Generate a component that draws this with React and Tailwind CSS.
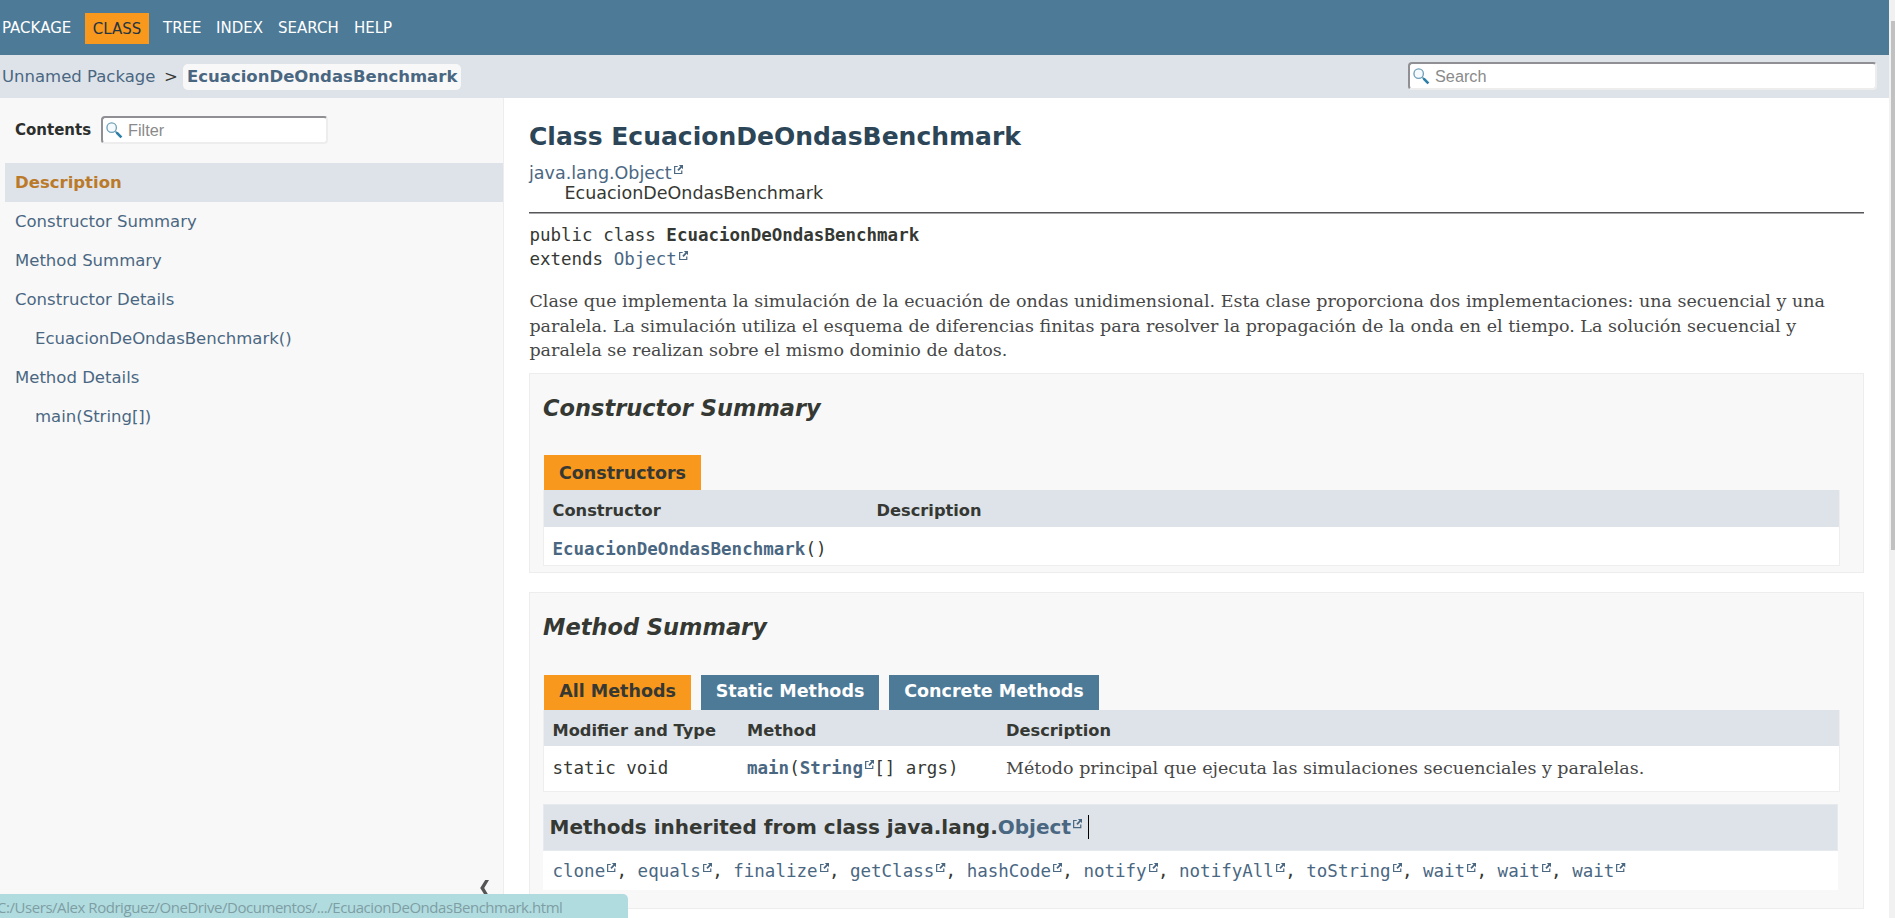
import React from "react";

const SANS = "font-['DejaVu_Sans',sans-serif]";
const MONO = "font-['DejaVu_Sans_Mono',monospace]";

function Ext({ className = "" }) {
  return (
    <svg viewBox="0 0 10 10" className={"inline-block size-[9.25px] ml-[2px] align-baseline relative -top-[5px] " + className}>
      <path d="M4 1.6H0.7V9.3H8.4V6" fill="none" stroke="#4A6782" strokeWidth="1.3" />
      <path d="M5.2 0H10V4.8L8.3 3.1L5 6.4L3.6 5L6.9 1.7Z" fill="#4A6782" />
    </svg>
  );
}

function SearchBox({ label, className }) {
  return (
    <div className={"flex items-center bg-white rounded-[4px] border-2 border-t-[#8f8f94] border-l-[#8f8f94] border-r-[#ededed] border-b-[#ededed] " + className}>
      <svg viewBox="0 0 18 18" className="size-[17px] ml-[3px] shrink-0">
        <circle cx="6" cy="6" r="5" fill="#f4fafd" stroke="#6f9fb8" strokeWidth="1.4" />
        <path d="M10 10L12 12" stroke="#4a86a5" strokeWidth="1.6" />
        <path d="M11.3 11.3L16.3 16.3" stroke="#2d7ea6" strokeWidth="2.8" />
      </svg>
      <span className="ml-[5px] text-[16.25px] leading-[20px] text-[#8a8a8a] font-['Liberation_Sans',sans-serif]">{label}</span>
    </div>
  );
}

const toc = [
  ["Constructor Summary", "pl-[15px]"],
  ["Method Summary", "pl-[15px]"],
  ["Constructor Details", "pl-[15px]"],
  ["EcuacionDeOndasBenchmark()", "pl-[35px]"],
  ["Method Details", "pl-[15px]"],
  ["main(String[])", "pl-[35px]"],
];

const inherited = ["clone", "equals", "finalize", "getClass", "hashCode", "notify", "notifyAll", "toString", "wait", "wait", "wait"];

export default function App() {
  return (
    <div className={"flex h-[918px] w-[1895px] overflow-hidden bg-white text-[#353833] relative " + SANS}>
      <div className="flex flex-col w-[1889px] h-full">
        <nav className="flex items-center h-[55px] shrink-0 bg-[#4D7A97] text-white text-[15px] leading-[32px] pl-[2px] pt-px">
          <span className="w-[83px]">PACKAGE</span>
          <span className="w-[64px] h-[31px] bg-[#F8981D] text-[#253441] text-center mr-[14px]">CLASS</span>
          <span className="w-[53px]">TREE</span>
          <span className="w-[62px]">INDEX</span>
          <span className="w-[76px]">SEARCH</span>
          <span>HELP</span>
        </nav>
        <div className="flex items-center h-[43px] shrink-0 bg-[#dee3e9] pl-[2px] pr-[12px] text-[16.5px]">
          <span className="w-[162px] pt-px text-[#4A6782]">Unnamed Package</span>
          <span className="w-[19px] pt-px">&gt;</span>
          <span className="flex items-center w-[278px] h-[26px] rounded-[5px] bg-[#f8f8f8] pl-[4px] pt-px font-bold text-[#4A6782]">EcuacionDeOndasBenchmark</span>
          <SearchBox label="Search" className="ml-auto mb-px w-[469px] h-[28px]" />
        </div>
        <div className="flex flex-1 min-h-0">
          <aside className="flex flex-col w-[504px] shrink-0 bg-[#f8f8f8] border-r border-[#ededed] text-[#4A6782] text-[16.5px]">
            <div className="flex items-center h-[65px] pl-[15px] pb-px">
              <span className="text-[15px] font-bold text-[#2c2f2c] w-[86px]">Contents</span>
              <SearchBox label="Filter" className="w-[227px] h-[28px]" />
            </div>
            <div className="ml-[5px] h-[39px] pl-[10px] pt-[2px] flex items-center bg-[#dee3e9] font-bold text-[#bb7a2a]">Description</div>
            {toc.map(([t, c]) => (
              <div key={t} className={"h-[39px] pt-[2px] flex items-center " + c}>{t}</div>
            ))}
            <svg viewBox="0 0 9 16" className="w-[9px] h-[16px] mt-auto mb-[22px] ml-[480px]">
              <path d="M5.2 0H9L4.2 8L9 16H5.2L0.2 8Z" fill="#555" />
            </svg>
          </aside>
          <main className="flex flex-col ml-[25px] w-[1335px] text-[17.5px]">
            <h1 className="mt-[22px] h-[34px] leading-[34px] text-[25px] font-bold text-[#2c4557]">Class EcuacionDeOndasBenchmark</h1>
            <div className="mt-[9px] h-[20px] leading-[20px] text-[#4A6782]">java.lang.Object<Ext /></div>
            <div className="h-[20px] leading-[20px] pl-[35.5px]">EcuacionDeOndasBenchmark</div>
            <div className="mt-[9px] h-[2px] border-t border-[#55565a] bg-[#a8a8aa]" />
            <div className={"mt-[9px] leading-[24px] h-[49px] pl-[0.4px] " + MONO}>
              <div>public class <b>EcuacionDeOndasBenchmark</b></div>
              <div>extends <span className="text-[#4A6782]">Object<Ext /></span></div>
            </div>
            <p className="mt-[17px] h-[84px] pl-[0.4px] leading-[24.5px] text-[#474747] font-['DejaVu_Serif',serif]">
              Clase que implementa la simulación de la ecuación de ondas unidimensional. Esta clase proporciona dos implementaciones: una secuencial y una<br />
              paralela. La simulación utiliza el esquema de diferencias finitas para resolver la propagación de la onda en el tiempo. La solución secuencial y<br />
              paralela se realizan sobre el mismo dominio de datos.
            </p>

            <section className="h-[200px] shrink-0 bg-[#f8f8f8] border border-[#ededed] pl-[13px]">
              <h2 className="mt-[19px] h-[30px] leading-[30px] text-[22.5px] font-bold italic">Constructor Summary</h2>
              <div className="mt-[32px] ml-px flex">
                <div className="h-[35px] w-[157px] bg-[#F8981D] text-center leading-[36px] font-bold text-[#353833]">Constructors</div>
              </div>
              <div className="w-[1297px] border border-t-0 border-[#eeeeee] bg-white">
                <div className="flex h-[37px] items-center bg-[#dee3e9] pl-[8.5px] pt-[5px] text-[16.25px] font-bold">
                  <span className="w-[324px]">Constructor</span><span>Description</span>
                </div>
                <div className={"h-[38px] pl-[8.5px] leading-[44px] " + MONO}>
                  <b className="text-[#4A6782]">EcuacionDeOndasBenchmark</b>()
                </div>
              </div>
            </section>

            <section className="mt-[19px] h-[317px] shrink-0 bg-[#f8f8f8] border border-[#ededed] pl-[13px]">
              <h2 className="mt-[19px] h-[30px] leading-[30px] text-[22.5px] font-bold italic">Method Summary</h2>
              <div className="mt-[33px] ml-px flex gap-[10px] h-[35px] font-bold leading-[33px] text-center">
                <div className="w-[147px] bg-[#F8981D]">All Methods</div>
                <div className="w-[178px] bg-[#4D7A97] text-white">Static Methods</div>
                <div className="w-[210px] bg-[#4D7A97] text-white">Concrete Methods</div>
              </div>
              <div className="w-[1297px] border border-t-0 border-[#eeeeee] bg-white">
                <div className="flex h-[36px] items-center bg-[#dee3e9] pl-[8.5px] text-[16.25px] font-bold pt-[6px]">
                  <span className="w-[194.5px]">Modifier and Type</span><span className="w-[259px]">Method</span><span>Description</span>
                </div>
                <div className={"h-[45px] flex pl-[8.5px] leading-[44px] " + MONO}>
                  <span className="w-[194.5px]">static void</span>
                  <span className="w-[259px] whitespace-pre"><b className="text-[#4A6782]">main</b>(<b className="text-[#4A6782]">String<Ext /></b>[] args)</span>
                  <span className="text-[#474747] font-['DejaVu_Serif',serif]">Método principal que ejecuta las simulaciones secuenciales y paralelas.</span>
                </div>
              </div>
              <div className="mt-[12px] w-[1295px] bg-white">
                <h3 className="h-[47px] flex items-center bg-[#dee3e9] border border-[#e6e9ee] pl-[5.5px] pb-[2px] text-[20px] font-bold">
                  <span>Methods inherited from class java.lang.<span className="text-[#4A6782]">Object<Ext /></span></span>
                  <span className="ml-[6px] h-[24px] w-px bg-black" />
                </h3>
                <div className={"h-[39px] pl-[9.5px] leading-[40px] whitespace-nowrap " + MONO}>
                  {inherited.map((m, i) => (
                    <React.Fragment key={i}>
                      <span className="text-[#4A6782]">{m}<Ext className="mr-[0.1px]" /></span>{i < 10 ? ", " : ""}
                    </React.Fragment>
                  ))}
                </div>
              </div>
            </section>
          </main>
        </div>
      </div>
      <div className="w-[6px] h-full bg-[#f1f1f1] pt-[21px] pl-[2px]">
        <div className="h-[529px] bg-[#c1c1c1]" />
      </div>
      <div className="absolute left-0 bottom-0 h-[24px] w-[628px] rounded-tr-[5px] bg-[#b0dce0] leading-[26px] whitespace-nowrap text-[15px] tracking-[-0.45px] text-[#7f9ea3] font-['Open_Sans',sans-serif]">
        <span className="-ml-[3px]">C:/Users/Alex Rodriguez/OneDrive/Documentos/.../EcuacionDeOndasBenchmark.html</span>
      </div>
    </div>
  );
}
